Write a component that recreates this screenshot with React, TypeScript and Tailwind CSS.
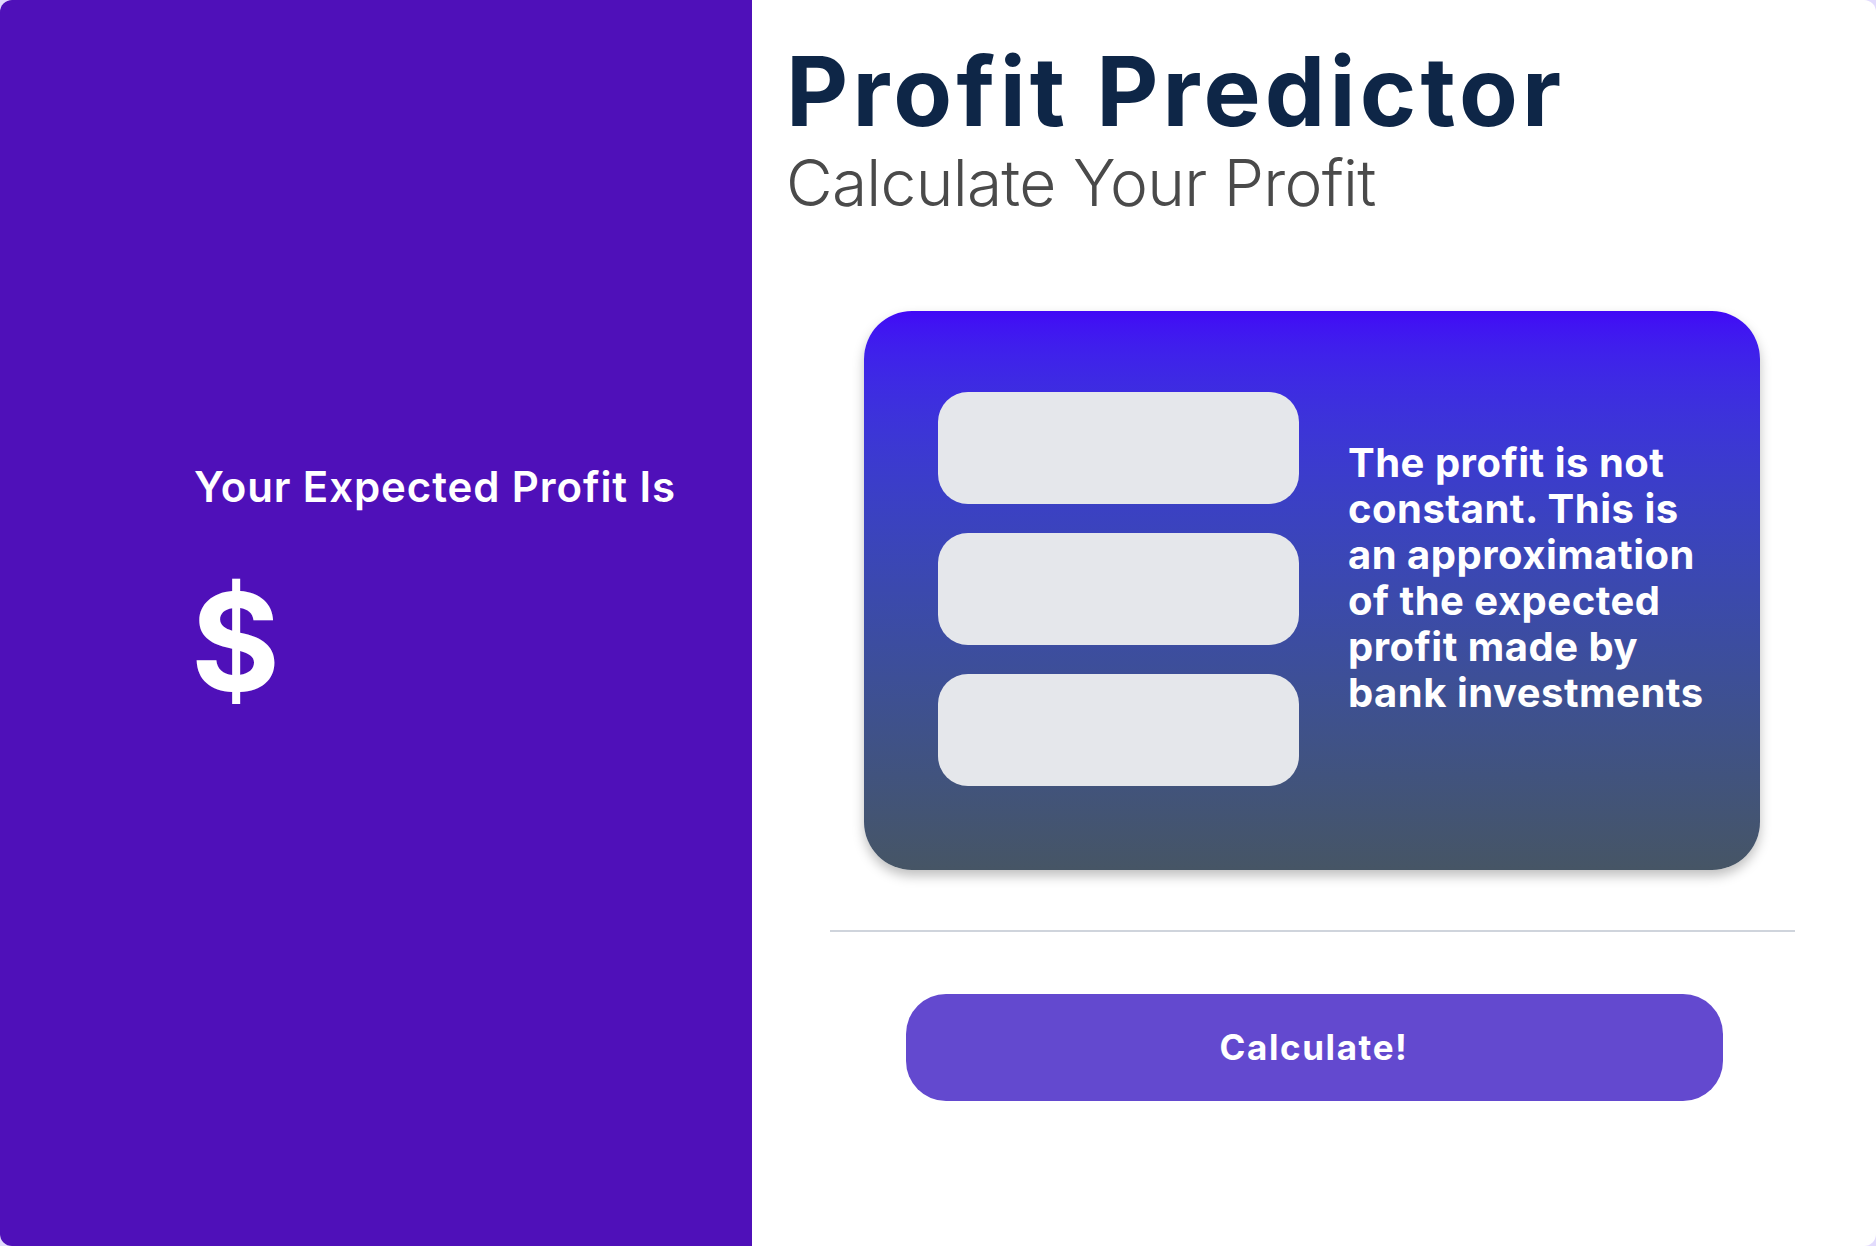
import React from "react";

const font = { fontFamily: "Inter, 'Open Sans', sans-serif" };

export default function App() {
  return (
    <div className="w-[1876px] h-[1246px] bg-[#e2dbfd]" style={font}>
      <div className="w-full h-full rounded-[12px] overflow-hidden flex bg-white">
        <div className="w-[752px] h-full bg-[#4f10b9] flex flex-col pl-[194px] pt-[462px]">
          <div className="text-white text-[42px] leading-[1.2] font-semibold tracking-[0.9px]">
            Your Expected Profit Is
          </div>
          <div className="text-white text-[136px] leading-none font-bold mt-[62px] -ml-[3px]">$</div>
        </div>
        <div className="flex-1 flex flex-col">
          <div className="pl-[34px] pt-[43px]">
            <h1 className="text-[96px] leading-none font-bold text-[#0e2647] tracking-[4.2px]">Profit Predictor</h1>
            <p className="text-[64px] leading-none font-light text-[#4a4a4a] mt-[12px] tracking-[-0.7px]">Calculate Your Profit</p>
          </div>
          <div className="flex justify-center mt-[96px] pr-[4px]">
            <div className="w-[896px] h-[559px] rounded-[48px] bg-gradient-to-b from-[#4108f6] to-[#465565] shadow-[0_6px_12px_rgba(0,0,0,0.25)] flex items-center pl-[74px] pr-[30px]">
              <div className="flex flex-col gap-[29px] -mt-[4px]">
                <div className="w-[361px] h-[112px] rounded-[30px] bg-[#e5e7eb]" />
                <div className="w-[361px] h-[112px] rounded-[30px] bg-[#e5e7eb]" />
                <div className="w-[361px] h-[112px] rounded-[30px] bg-[#e5e7eb]" />
              </div>
              <div className="ml-[49px] text-white text-[40px] leading-[46px] font-bold tracking-[0.5px] -mt-[26px] whitespace-nowrap">
                <div>The profit is not</div>
                <div>constant. This is</div>
                <div>an approximation</div>
                <div>of the expected</div>
                <div>profit made by</div>
                <div>bank investments</div>
              </div>
            </div>
          </div>
          <div className="flex justify-center mt-[60px] pr-[4px]">
            <div className="w-[965px] h-[2px] bg-[#cfd4dc]" />
          </div>
          <div className="flex justify-center mt-[62px]">
            <button className="w-[817px] h-[107px] rounded-[40px] bg-[#6349cf] text-white text-[35px] font-bold tracking-[1.6px]">
              Calculate!
            </button>
          </div>
        </div>
      </div>
    </div>
  );
}
